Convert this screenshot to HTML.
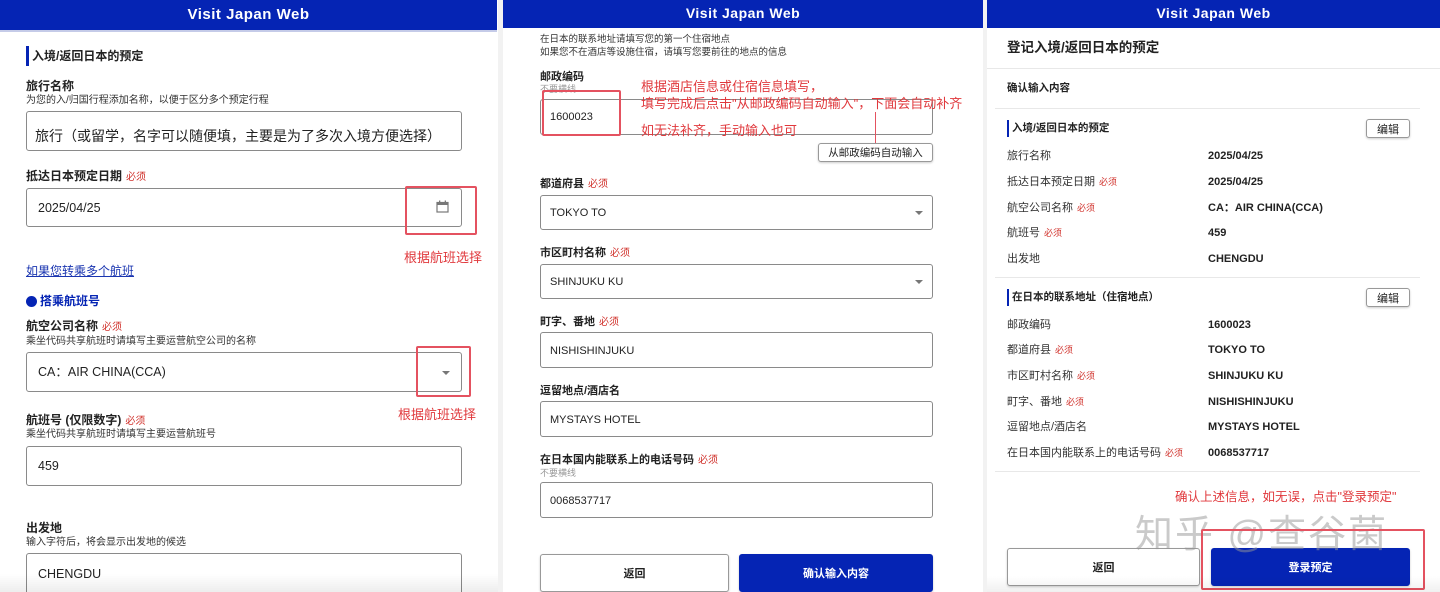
<!DOCTYPE html>
<html style="width:1440px;height:592px;overflow:hidden"><head><meta charset="utf-8"><style>
*{margin:0;padding:0;box-sizing:border-box}
body{width:1440px;height:592px;overflow:hidden;background:#fff;position:relative;font-family:"Liberation Sans","Noto Sans CJK SC",sans-serif;color:#222}
.a{position:absolute;white-space:nowrap;line-height:1}
.hd{position:absolute;top:0;background:#0524b4;color:#fff;font-weight:bold;font-size:15px;text-align:center;letter-spacing:0.5px}
.b{font-weight:bold;font-size:12px;color:#222}
.s{font-size:10px;color:#333}
.req{color:#d0302a;font-size:10px;font-weight:normal;margin-left:4px}
.in{position:absolute;border:1px solid #8a8a8a;border-radius:3px;background:#fff}
.txt{font-size:12.5px;color:#222}
.red{color:#e0383c;font-size:13px}
.rb{position:absolute;border:2px solid #e45260;border-radius:2px}
.arr{position:absolute;width:0;height:0;border-left:4px solid transparent;border-right:4px solid transparent;border-top:4px solid #777}
.btn{position:absolute;border:1px solid #999;border-radius:3px;background:#fff;font-size:11px;font-weight:bold;display:flex;align-items:center;justify-content:center;box-shadow:0 1px 2px rgba(0,0,0,.2)}
.blue{background:#0524b4;color:#fff;border-color:#0524b4}
.l{font-size:11px;color:#333}
.v{font-size:11px;font-weight:bold;color:#222}
.div{position:absolute;height:1px;background:#e8e8e8}
</style></head><body>
<div class="a" style="left:498px;top:0;width:5px;height:592px;background:#f2f2f2"></div>
<div class="a" style="left:983px;top:0;width:4px;height:592px;background:#f2f2f2"></div>

<!-- PANEL 1 -->
<div class="hd" style="left:0;width:497px;height:32px;line-height:30px;border-bottom:2px solid #c5cbe8">Visit Japan Web</div>
<div class="a" style="left:26px;top:46px;width:3px;height:20px;background:#0524b4"></div>
<div class="a b" style="left:32px;top:50px">入境/返回日本的预定</div>
<div class="a b" style="left:26px;top:80px">旅行名称</div>
<div class="a s" style="left:26px;top:96px">为您的入/归国行程添加名称，以便于区分多个预定行程</div>
<div class="in" style="left:26px;top:111px;width:436px;height:40px"></div>
<div class="a" style="left:35px;top:129px;font-size:14px">旅行（或留学，名字可以随便填，主要是为了多次入境方便选择）</div>
<div class="a b" style="left:26px;top:170px">抵达日本预定日期<span class="req">必须</span></div>
<div class="in" style="left:26px;top:188px;width:436px;height:39px"></div>
<div class="a txt" style="left:38px;top:202px">2025/04/25</div>
<svg class="a" style="left:436px;top:200px" width="13" height="13" viewBox="0 0 13 13"><rect x="1" y="2.5" width="11" height="9.5" fill="none" stroke="#777" stroke-width="1.2"/><rect x="1" y="2.5" width="11" height="2.5" fill="#777"/><rect x="3" y="0.5" width="1.3" height="3" fill="#777"/><rect x="8.7" y="0.5" width="1.3" height="3" fill="#777"/></svg>
<div class="rb" style="left:405px;top:186px;width:72px;height:49px"></div>
<div class="a red" style="left:404px;top:251px">根据航班选择</div>
<div class="a" style="left:26px;top:265px;font-size:12px;color:#1a35b0;text-decoration:underline">如果您转乘多个航班</div>
<div class="a" style="left:26px;top:296px;width:11px;height:11px;border-radius:50%;background:#0524b4"></div>
<div class="a" style="left:40px;top:295px;font-size:12px;font-weight:bold;color:#0524b4">搭乘航班号</div>
<div class="a b" style="left:26px;top:320px">航空公司名称<span class="req">必须</span></div>
<div class="a s" style="left:26px;top:337px">乘坐代码共享航班时请填写主要运营航空公司的名称</div>
<div class="in" style="left:26px;top:352px;width:436px;height:40px"></div>
<div class="a txt" style="left:38px;top:366px">CA：AIR CHINA(CCA)</div>
<div class="arr" style="left:442px;top:371px"></div>
<div class="rb" style="left:416px;top:346px;width:55px;height:51px"></div>
<div class="a red" style="left:398px;top:408px">根据航班选择</div>
<div class="a b" style="left:26px;top:414px">航班号 (仅限数字)<span class="req">必须</span></div>
<div class="a s" style="left:26px;top:430px">乘坐代码共享航班时请填写主要运营航班号</div>
<div class="in" style="left:26px;top:446px;width:436px;height:40px"></div>
<div class="a txt" style="left:38px;top:460px">459</div>
<div class="a b" style="left:26px;top:522px">出发地</div>
<div class="a s" style="left:26px;top:538px">输入字符后，将会显示出发地的候选</div>
<div class="in" style="left:26px;top:553px;width:436px;height:39px;border-bottom:none;border-radius:3px 3px 0 0"></div>
<div class="a txt" style="left:38px;top:568px">CHENGDU</div>
<div class="a" style="left:0;top:574px;width:498px;height:18px;background:linear-gradient(rgba(0,0,0,0),rgba(0,0,0,.07))"></div>

<!-- PANEL 2 -->
<div class="hd" style="left:503px;width:480px;height:28px;line-height:26px;font-size:14px">Visit Japan Web</div>
<div class="a s" style="left:540px;top:35px;font-size:9.5px">在日本的联系地址请填写您的第一个住宿地点</div>
<div class="a s" style="left:540px;top:48px;font-size:9.5px">如果您不在酒店等设施住宿，请填写您要前往的地点的信息</div>
<div class="a b" style="left:540px;top:72px;font-size:11px">邮政编码</div>
<div class="a" style="left:540px;top:85px;font-size:9px;color:#999">不要横线</div>
<div class="in" style="left:540px;top:99px;width:393px;height:36px"></div>
<div class="a" style="left:550px;top:112px;font-size:11px">1600023</div>
<div class="rb" style="left:542px;top:90px;width:79px;height:46px"></div>
<div class="a red" style="left:641px;top:80px">根据酒店信息或住宿信息填写，</div>
<div class="a red" style="left:641px;top:97px">填写完成后点击"从邮政编码自动输入"，下面会自动补齐</div>
<div class="a red" style="left:641px;top:124px">如无法补齐，手动输入也可</div>
<div class="a" style="left:875px;top:112px;width:1px;height:31px;background:#e45260"></div>
<div class="btn" style="left:818px;top:143px;width:115px;height:19px;font-weight:normal;font-size:10.5px">从邮政编码自动输入</div>
<div class="a b" style="left:540px;top:179px;font-size:11px">都道府县<span class="req">必须</span></div>
<div class="in" style="left:540px;top:195px;width:393px;height:35px"></div>
<div class="a" style="left:550px;top:208px;font-size:11px">TOKYO TO</div>
<div class="arr" style="left:915px;top:211px"></div>
<div class="a b" style="left:540px;top:248px;font-size:11px">市区町村名称<span class="req">必须</span></div>
<div class="in" style="left:540px;top:264px;width:393px;height:35px"></div>
<div class="a" style="left:550px;top:277px;font-size:11px">SHINJUKU KU</div>
<div class="arr" style="left:915px;top:280px"></div>
<div class="a b" style="left:540px;top:317px;font-size:11px">町字、番地<span class="req">必须</span></div>
<div class="in" style="left:540px;top:332px;width:393px;height:36px"></div>
<div class="a" style="left:550px;top:346px;font-size:11px">NISHISHINJUKU</div>
<div class="a b" style="left:540px;top:386px;font-size:11px">逗留地点/酒店名</div>
<div class="in" style="left:540px;top:401px;width:393px;height:36px"></div>
<div class="a" style="left:550px;top:415px;font-size:11px">MYSTAYS HOTEL</div>
<div class="a b" style="left:540px;top:455px;font-size:11px">在日本国内能联系上的电话号码<span class="req">必须</span></div>
<div class="a" style="left:540px;top:469px;font-size:9px;color:#999">不要横线</div>
<div class="in" style="left:540px;top:482px;width:393px;height:36px"></div>
<div class="a" style="left:550px;top:496px;font-size:11px">0068537717</div>
<div class="btn" style="left:540px;top:554px;width:189px;height:38px">返回</div>
<div class="btn blue" style="left:739px;top:554px;width:194px;height:38px">确认输入内容</div>

<!-- PANEL 3 -->
<div class="hd" style="left:987px;width:453px;height:28px;line-height:26px;font-size:14px">Visit Japan Web</div>
<div class="a" style="left:1007px;top:41px;font-size:13.5px;font-weight:bold">登记入境/返回日本的预定</div>
<div class="div" style="left:987px;top:68px;width:453px"></div>
<div class="a v" style="left:1007px;top:83px;font-size:10.5px">确认输入内容</div>
<div class="div" style="left:995px;top:108px;width:425px"></div>
<div class="a" style="left:1007px;top:120px;width:2px;height:17px;background:#0524b4"></div>
<div class="a v" style="left:1012px;top:123px;font-size:10.5px">入境/返回日本的预定</div>
<div class="btn" style="left:1366px;top:119px;width:44px;height:19px;font-weight:normal">编辑</div>
<div class="a l" style="left:1007px;top:151px">旅行名称</div><div class="a v" style="left:1208px;top:151px">2025/04/25</div>
<div class="a l" style="left:1007px;top:177px">抵达日本预定日期<span class="req" style="font-size:9px">必须</span></div><div class="a v" style="left:1208px;top:177px">2025/04/25</div>
<div class="a l" style="left:1007px;top:203px">航空公司名称<span class="req" style="font-size:9px">必须</span></div><div class="a v" style="left:1208px;top:203px">CA：AIR CHINA(CCA)</div>
<div class="a l" style="left:1007px;top:228px">航班号<span class="req" style="font-size:9px">必须</span></div><div class="a v" style="left:1208px;top:228px">459</div>
<div class="a l" style="left:1007px;top:254px">出发地</div><div class="a v" style="left:1208px;top:254px">CHENGDU</div>
<div class="div" style="left:995px;top:277px;width:425px"></div>
<div class="a" style="left:1007px;top:289px;width:2px;height:17px;background:#0524b4"></div>
<div class="a v" style="left:1012px;top:292px;font-size:10.5px">在日本的联系地址（住宿地点）</div>
<div class="btn" style="left:1366px;top:288px;width:44px;height:19px;font-weight:normal">编辑</div>
<div class="a l" style="left:1007px;top:320px">邮政编码</div><div class="a v" style="left:1208px;top:320px">1600023</div>
<div class="a l" style="left:1007px;top:345px">都道府县<span class="req" style="font-size:9px">必须</span></div><div class="a v" style="left:1208px;top:345px">TOKYO TO</div>
<div class="a l" style="left:1007px;top:371px">市区町村名称<span class="req" style="font-size:9px">必须</span></div><div class="a v" style="left:1208px;top:371px">SHINJUKU KU</div>
<div class="a l" style="left:1007px;top:397px">町字、番地<span class="req" style="font-size:9px">必须</span></div><div class="a v" style="left:1208px;top:397px">NISHISHINJUKU</div>
<div class="a l" style="left:1007px;top:422px">逗留地点/酒店名</div><div class="a v" style="left:1208px;top:422px">MYSTAYS HOTEL</div>
<div class="a l" style="left:1007px;top:448px">在日本国内能联系上的电话号码<span class="req" style="font-size:9px">必须</span></div><div class="a v" style="left:1208px;top:448px">0068537717</div>
<div class="div" style="left:995px;top:471px;width:425px"></div>
<div class="a red" style="left:1175px;top:491px;font-size:12.5px">确认上述信息，如无误，点击"登录预定"</div>
<div class="btn" style="left:1007px;top:548px;width:193px;height:38px">返回</div>
<div class="btn blue" style="left:1211px;top:548px;width:199px;height:38px">登录预定</div>
<div class="a" style="left:1135px;top:516px;font-size:38px;color:rgba(150,150,150,.5);letter-spacing:2px">知乎 @查谷菌</div>
<div class="rb" style="left:1201px;top:529px;width:224px;height:61px"></div>
<div class="a" style="left:987px;top:576px;width:453px;height:16px;background:linear-gradient(rgba(0,0,0,0),rgba(0,0,0,.06))"></div>
</body></html>
